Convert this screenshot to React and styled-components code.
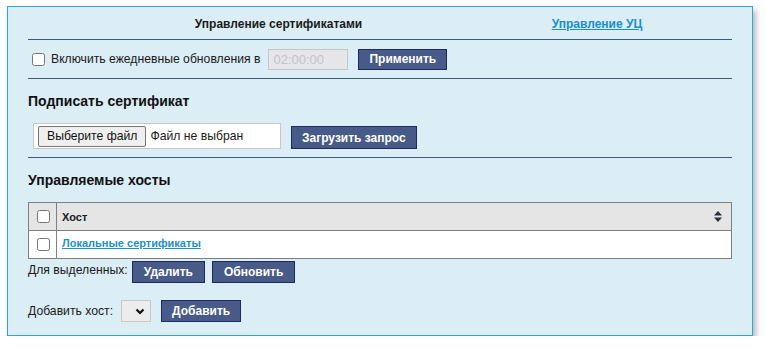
import React from 'react';
import styled, { createGlobalStyle } from 'styled-components';

const GlobalStyle = createGlobalStyle`
body {
  margin: 0;
  background: #ffffff;
  font-family: "Liberation Sans", Arial, sans-serif;
  color: #1a1a1a;
}
`;

const Page = styled.div`
padding: 6px 0 0 7px;
`;

const Panel = styled.div`
width: 746px;
height: 330px;
background: #dbedf5;
border: 1px solid #34a2d6;
box-shadow: 3px 4px 6px rgba(0, 0, 0, 0.28);
padding: 0 20px;
box-sizing: border-box;
display: flex;
flex-direction: column;
`;

const TabBar = styled.div`
display: grid;
grid-template-columns: 501px 136px 1fr;
height: 33px;
align-items: center;
border-bottom: 1px solid #3d5b77;
box-sizing: border-box;
padding-top: 1px;
`;

const Tab = styled.div`
text-align: center;
font-size: 12px;
font-weight: bold;
`;

const TabLink = styled.a`
text-align: center;
font-size: 12px;
font-weight: bold;
color: #1a8fcf;
text-decoration: underline;
`;

const Row = styled.div`
display: flex;
align-items: ${(p) => p.align || 'center'};
height: ${(p) => p.h}px;
gap: ${(p) => p.gap || 0}px;
padding-top: ${(p) => p.top || 0}px;
border-bottom: ${(p) => (p.rule ? '1px solid #3d5b77' : 'none')};
box-sizing: border-box;
font-size: 12.2px;
`;

const Check = styled.input.attrs({ type: 'checkbox' })`
width: 13px;
height: 13px;
margin: 0;
`;

const Label = styled.label`
display: flex;
align-items: center;
gap: 6px;
margin-left: 4px;
`;

const TimeInput = styled.input`
width: 80px;
height: 21px;
box-sizing: border-box;
border: 1px solid #c6c6c6;
background: #e4e6e9;
font-family: "Liberation Sans", Arial, sans-serif;
font-size: 13px;
padding: 0 4px;
&::placeholder {
  color: #c2c4c7;
}
`;

const Button = styled.button`
height: ${(p) => p.h || 21}px;
padding: 0 ${(p) => p.px || 11}px;
margin-top: ${(p) => p.mt || 0}px;
background: #485a87;
border: 1px solid #1c2a6d;
color: #ffffff;
font-family: "Liberation Sans", Arial, sans-serif;
font-size: 12px;
font-weight: bold;
cursor: pointer;
`;

const Section = styled.div`
display: flex;
flex-direction: column;
border-bottom: ${(p) => (p.rule ? '1px solid #3d5b77' : 'none')};
`;

const Heading = styled.h3`
margin: 0;
height: ${(p) => p.h}px;
display: flex;
align-items: center;
font-size: 14px;
font-weight: bold;
color: #111;
`;

const FileBox = styled.div`
width: 248px;
height: 26px;
box-sizing: border-box;
margin-left: 5px;
background: #ffffff;
border: 1px solid #c8c8c8;
display: flex;
align-items: center;
padding-left: 4px;
gap: 4px;
font-size: 12.2px;
`;

const FileButton = styled.button`
height: 21px;
padding: 0 8px;
background: #efefef;
border: 1px solid #777;
border-radius: 2px;
font-family: "Liberation Sans", Arial, sans-serif;
font-size: 12.2px;
color: #111;
`;

const Table = styled.div`
border: 1px solid #808080;
background: #ffffff;
display: flex;
flex-direction: column;
`;

const TableRow = styled.div`
display: grid;
grid-template-columns: 28px 1fr;
height: 27px;
background: ${(p) => (p.head ? '#e5e5e5' : '#ffffff')};
border-bottom: ${(p) => (p.head ? '1px solid #808080' : 'none')};
`;

const CheckCell = styled.div`
display: flex;
align-items: center;
justify-content: center;
border-right: 1px solid #808080;
padding-left: 1px;
`;

const Cell = styled.div`
display: flex;
align-items: center;
justify-content: space-between;
padding: 0 9px 0 5px;
font-size: 11px;
font-weight: bold;
`;

const HostLink = styled.a`
color: #1a8fcf;
text-decoration: underline;
font-size: 11px;
font-weight: bold;
margin-top: -3px;
`;

const SelectBox = styled.div`
width: 30px;
height: 22px;
box-sizing: border-box;
border: 1px solid #c8c8c8;
background: #ececec;
display: flex;
align-items: center;
justify-content: flex-end;
padding-right: 5px;
`;

const Caption = styled.span`
margin: ${(p) => p.m || '0'};
`;

const SortIcon = () => (
  <svg width="8" height="11" viewBox="0 0 8 11">
    <path d="M4 0 L8 4.5 H0 Z" fill="#2a3038" />
    <path d="M4 11 L8 6.5 H0 Z" fill="#2a3038" />
  </svg>
);

const Chevron = () => (
  <svg width="10" height="7" viewBox="0 0 10 7">
    <path d="M1.5 1.5 L5 5 L8.5 1.5" stroke="#111" strokeWidth="2.2" fill="none" />
  </svg>
);

const App = () => (
  <Page>
    <GlobalStyle />
    <Panel>
      <TabBar>
        <Tab>Управление сертификатами</Tab>
        <TabLink href="#">Управление УЦ</TabLink>
      </TabBar>
      <Row h={39} gap={8} rule>
        <Label>
          <Check />
          Включить ежедневные обновления в
        </Label>
        <TimeInput placeholder="02:00:00" disabled />
        <Button px={10} style={{ marginLeft: 2 }}>Применить</Button>
      </Row>
      <Section rule>
        <Heading h={44}>Подписать сертификат</Heading>
        <Row h={34} gap={10} align="flex-start">
          <FileBox>
            <FileButton>Выберите файл</FileButton>
            Файл не выбран
          </FileBox>
          <Button h={23} px={10} mt={3}>Загрузить запрос</Button>
        </Row>
      </Section>
      <Heading h={44}>Управляемые хосты</Heading>
      <Table>
        <TableRow head>
          <CheckCell><Check /></CheckCell>
          <Cell>
            Хост
            <SortIcon />
          </Cell>
        </TableRow>
        <TableRow>
          <CheckCell><Check /></CheckCell>
          <Cell>
            <HostLink href="#">Локальные сертификаты</HostLink>
          </Cell>
        </TableRow>
      </Table>
      <Row h={24} gap={7} align="flex-end">
        <Caption m="0 -3px 6px 0">Для выделенных:</Caption>
        <Button h={22} px={11}>Удалить</Button>
        <Button h={22} px={11}>Обновить</Button>
      </Row>
      <Row h={51} gap={9} top={17} align="flex-start">
        <Caption m="4px -1px 0 0">Добавить хост:</Caption>
        <SelectBox><Chevron /></SelectBox>
        <Button h={22} px={10} style={{ marginLeft: 1 }}>Добавить</Button>
      </Row>
    </Panel>
  </Page>
);

export default App;
